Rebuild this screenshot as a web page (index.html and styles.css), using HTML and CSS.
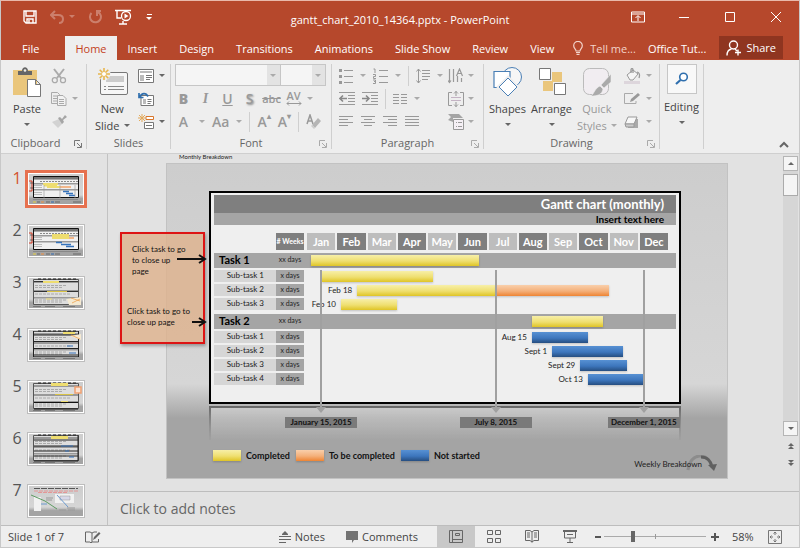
FILE: index.html
```html
<!DOCTYPE html>
<html lang="en">
<head>
    <meta charset="UTF-8">
    <meta name="viewport" content="width=device-width, initial-scale=1.0">
    <title>gantt_chart_2010_14364.pptx - PowerPoint</title>
    <link rel="stylesheet" href="styles.css">
</head>
<body>
<div class="window">
    <header class="titlebar">
        <div class="quick-access">
            <button aria-label="Save"><svg width="14" height="14" viewBox="0 0 14 14"><path d="M1 1h12v12H3l-2-2zM3 1v5h8V1M4 13V9h6v4M6 10v3" fill="none" stroke="#fff" stroke-width="1.4"/></svg></button>
            <button class="faded undo" aria-label="Undo"><svg width="14" height="14" viewBox="0 0 14 14"><path d="M5 1L1 5l4 4M1 5h7c3 0 5 1.500 5 4s-1.500 4-4 4" fill="none" stroke="#fff" stroke-width="2"/></svg><i class="caret"></i></button>
            <button class="faded" aria-label="Repeat"><svg width="14" height="14" viewBox="0 0 14 14"><path d="M3.500 3A5.500 5.500 0 1 0 10 2M9 6V1h4" fill="none" stroke="#fff" stroke-width="2"/></svg></button>
            <button aria-label="Start from beginning"><svg width="18" height="16" viewBox="0 0 18 16"><path d="M0 1.500h16M2 2v7h4M4 15h8M8 12v3" fill="none" stroke="#fff" stroke-width="1.400"/><circle cx="11" cy="7" r="4.500" fill="#b6482c" stroke="#fff" stroke-width="1.300"/><path d="M9.500 4.500l4 2.500-4 2.500z" fill="#fff"/></svg></button>
            <button class="customize" aria-label="Customize toolbar"><span class="bar-line"></span><i class="caret"></i></button>
        </div>
        <h1>gantt_chart_2010_14364.pptx - PowerPoint</h1>
        <div class="window-buttons">
            <button aria-label="Ribbon display options"><svg width="14" height="12" viewBox="0 0 14 12"><path d="M.5 1h13v10H.5zM.5 3h13M7 10V5M4.500 7L7 4.500 9.500 7" fill="none" stroke="#fff"/></svg></button>
            <button aria-label="Minimize"><svg width="10" height="10" viewBox="0 0 10 10"><path d="M0 5.500h10" stroke="#fff"/></svg></button>
            <button aria-label="Maximize"><svg width="10" height="10" viewBox="0 0 10 10"><path d="M.5.5h9v9h-9z" fill="none" stroke="#fff"/></svg></button>
            <button aria-label="Close"><svg width="10" height="10" viewBox="0 0 10 10"><path d="M0 0l10 10M10 0L0 10" stroke="#fff"/></svg></button>
        </div>
    </header>

    <nav class="tabs">
        <button class="file">File</button>
        <button class="active">Home</button>
        <button>Insert</button>
        <button>Design</button>
        <button>Transitions</button>
        <button>Animations</button>
        <button>Slide Show</button>
        <button>Review</button>
        <button>View</button>
        <button class="tell-me"><svg width="10" height="14" viewBox="0 0 10 14"><path d="M3 10C3 8 .7 7.500.7 4.700a4.300 4.300 0 0 1 8.600 0C9.300 7.500 7 8 7 10zM3 11.500h4M3.500 13.300h3" fill="none" stroke="#f3d3ca" stroke-width="1.200"/></svg>Tell me...</button>
        <button class="account">Office Tut...</button>
        <button class="share"><svg width="16" height="16" viewBox="0 0 16 16"><circle cx="7.500" cy="5" r="4" fill="none" stroke="#fff" stroke-width="1.400"/><path d="M1 15.500c0-4 2-6 4.500-6.500M9 9l2 2M12 9.500v6M9 12.500h6" fill="none" stroke="#fff" stroke-width="1.400"/></svg>Share</button>
    </nav>

    <section class="ribbon">
        <div class="group clipboard">
            <div class="group-body">
                <button class="big">
                    <svg width="30" height="30" viewBox="0 0 30 30"><path d="M1 3h24v25H1z" fill="#eac67c"/><path d="M6 8V4h4c0-5 6-5 6 0h4v4z" fill="#666"/><circle cx="13" cy="3.500" r="1.300" fill="#eee"/><path d="M15.500 12.500h8l5 5v12h-13zM23.500 12.500v5h5" fill="#fff" stroke="#777"/></svg>
                    Paste<i class="caret"></i>
                </button>
                <div class="stack faded-icons">
                    <button aria-label="Cut"><svg width="16" height="16" viewBox="0 0 16 16"><path d="M3 1l7 9M13 1L6 10" fill="none" stroke="#aaa" stroke-width="2"/><circle cx="3.800" cy="12.200" r="2.500" fill="none" stroke="#aaa" stroke-width="1.300"/><circle cx="12" cy="12.200" r="2.500" fill="none" stroke="#aaa" stroke-width="1.300"/></svg></button>
                    <button aria-label="Copy"><svg width="16" height="16" viewBox="0 0 16 16"><path d="M.5 1.500h6l2 2v9h-8zM2 5h4M2 7.500h4M2 10h4" fill="none" stroke="#aaa"/><path d="M6.500 4.500h5.500l3 3v7H6.500z" fill="#f2f2f2" stroke="#aaa"/><path d="M8 8.500h5M8 10.500h5M8 12.500h5" stroke="#aaa"/></svg><i class="caret"></i></button>
                    <button aria-label="Format painter"><svg width="16" height="16" viewBox="0 0 16 16"><path d="M8 5l4 4-5 5-6-6z" fill="#d2d2d2"/><path d="M7 4l2-1 2 2 3-4 2 2-4 3 1 2-2 2z" fill="#a5a5a5"/></svg></button>
                </div>
            </div>
            <div class="group-label">Clipboard<svg class="launcher" width="8" height="8" viewBox="0 0 8 8"><path d="M.5 6V.5H6M3 3l4 4M7.500 3v4.500H3" fill="none" stroke="#777"/></svg></div>
        </div>

        <div class="group slides">
            <div class="group-body">
                <button class="big">
                    <svg width="31" height="30" viewBox="0 0 31 30"><rect x="3.500" y="5.500" width="27" height="22" rx="1.500" fill="#f6f6f6" stroke="#777"/><path d="M9 9h18v6H9z" fill="#ccc"/><path d="M7 19.500h2m2 0h16M7 22.500h2m2 0h16" stroke="#888"/><circle cx="7" cy="7" r="6.500" fill="#eee"/><path d="M7 1v12M1 7h12M2.700 2.700l8.600 8.600M11.300 2.700l-8.600 8.600" stroke="#e8b64e" stroke-width="1.600"/><circle cx="7" cy="7" r="2" fill="#fff"/></svg>
                    New<br><span>Slide<i class="caret"></i></span>
                </button>
                <div class="stack">
                    <button aria-label="Layout"><svg width="16" height="14" viewBox="0 0 16 14"><path d="M.5.5h15v13H.5z" fill="#fff" stroke="#777"/><path d="M2 2h12v2H2zM2 6h4v6H2z" fill="#bbb"/><path d="M8 6.500h6M8 8.500h6M8 10.500h4" stroke="#777"/></svg><i class="caret"></i></button>
                    <button aria-label="Reset"><svg width="16" height="14" viewBox="0 0 16 14"><path d="M3 3.500h12.500v10H3z" fill="#fff" stroke="#777"/><path d="M5 7h3v5H5z" fill="#bbb"/><path d="M9.500 7.500h4M9.500 9.500h4M9.500 11.500h3" stroke="#777"/><path d="M1.500 5C4 .5 8 .5 10 4.500M1 1v4.500h4.500" fill="none" stroke="#2f6fae" stroke-width="1.700"/></svg></button>
                    <button aria-label="Section"><svg width="16" height="16" viewBox="0 0 16 16"><path d="M8 2.500h7.500v3H8z" fill="#fff" stroke="#d9762b"/><path d="M6.500 8.500h9v6h-9zM8 11.500h6" fill="#fff" stroke="#777"/><path d="M4 0v8M0 4h8M1 1l6 6M7 1L1 7" stroke="#e3a95a"/></svg><i class="caret"></i></button>
                </div>
            </div>
            <div class="group-label">Slides</div>
        </div>

        <div class="group font faded-group">
            <div class="group-body rows">
                <div class="combos">
                    <div class="combo wide"><select aria-label="Font"><option></option></select></div>
                    <div class="combo"><select aria-label="Font size"><option></option></select></div>
                </div>
                <div class="tool-row letters">
                    <button><b>B</b></button>
                    <button><em>I</em></button>
                    <button><u>U</u></button>
                    <button class="shadow">S</button>
                    <button class="small"><s>abc</s></button>
                    <button class="spacing" aria-label="Character spacing">AV<svg width="16" height="5" viewBox="0 0 16 5"><path d="M1 2.500h14M3 .5l-2 2 2 2M13 .5l2 2-2 2" fill="none" stroke="#999"/></svg></button>
                    <i class="caret"></i>
                </div>
                <div class="tool-row letters sizes">
                    <button>A</button><i class="caret"></i>
                    <button class="aa">Aa</button><i class="caret"></i>
                    <span class="rule"></span>
                    <button class="aa">A<sup>▴</sup></button>
                    <button class="aa">A<sup>▾</sup></button>
                    <span class="rule"></span>
                    <button aria-label="Clear formatting"><svg width="16" height="16" viewBox="0 0 16 16"><path d="M1 10L4 1l3 9M2 7h4" fill="none" stroke="#999" stroke-width="1.500"/><path d="M6 11l6-7 3 3-6 7z" fill="#b5b5b5"/><path d="M5 12l3 3 1-1-3-3z" fill="#ccc"/></svg></button>
                </div>
            </div>
            <div class="group-label">Font<svg class="launcher" width="8" height="8" viewBox="0 0 8 8"><path d="M.5 6V.5H6M3 3l4 4M7.500 3v4.500H3" fill="none" stroke="#aaa"/></svg></div>
        </div>

        <div class="group paragraph faded-group">
            <div class="group-body">
                <div class="rows">
                    <div class="tool-row">
                        <button aria-label="Bullets"><svg width="14" height="16" viewBox="0 0 14 16"><path d="M5 2.500h9M5 8.500h9M5 14.500h9" stroke="#999"/><path d="M0 1h3v3H0zM0 7h3v3H0zM0 13h3v3H0z" fill="#999"/></svg></button><i class="caret"></i>
                        <button aria-label="Numbering"><svg width="15" height="16" viewBox="0 0 15 16"><path d="M6 2.500h9M6 8.500h9M6 14.500h9M.5 1H2v4M0 6.500h2.500v2H.5v2H3M0 12h2.500v3.500H0M1 13.500h1" fill="none" stroke="#999"/></svg></button><i class="caret"></i>
                        <span class="rule"></span>
                        <button aria-label="Line spacing"><svg width="14" height="16" viewBox="0 0 14 16"><path d="M6 2.500h8M6 5.500h8M6 8.500h8M6 11.500h6M2.500 1v14M.5 3.500L2.500 1l2 2.500M.5 12.500l2 2.500 2-2.500" fill="none" stroke="#999"/></svg></button><i class="caret"></i>
                    </div>
                    <div class="tool-row">
                        <button aria-label="Decrease indent"><svg width="16" height="13" viewBox="0 0 16 13"><path d="M0 .5h16M9 3.500h7M9 6.500h7M9 9.500h7M0 12.500h16" stroke="#999"/><path d="M1 6.500h7M4 3.500l-3 3 3 3" fill="none" stroke="#888" stroke-width="1.600"/></svg></button>
                        <button aria-label="Increase indent"><svg width="16" height="13" viewBox="0 0 16 13"><path d="M0 .5h16M9 3.500h7M9 6.500h7M9 9.500h7M0 12.500h16" stroke="#999"/><path d="M0 6.500h7M4 3.500l3 3-3 3" fill="none" stroke="#888" stroke-width="1.600"/></svg></button>
                        <span class="rule"></span>
                        <button aria-label="Columns"><svg width="14" height="12" viewBox="0 0 14 12"><path d="M0 1.500h6M8 1.500h6M0 4.500h6M8 4.500h6M0 7.500h6M8 7.500h6M0 10.500h6M8 10.500h6" stroke="#999"/></svg></button><i class="caret"></i>
                    </div>
                    <div class="tool-row aligns">
                        <button aria-label="Align left"><svg width="14" height="13" viewBox="0 0 14 13"><path d="M0 1.500h14M0 4.500h9M0 7.500h14M0 10.500h9" stroke="#999"/></svg></button>
                        <button aria-label="Center"><svg width="14" height="13" viewBox="0 0 14 13"><path d="M0 1.500h14M3 4.500h8M0 7.500h14M3 10.500h8" stroke="#999"/></svg></button>
                        <button aria-label="Align right"><svg width="14" height="13" viewBox="0 0 14 13"><path d="M0 1.500h14M5 4.500h9M0 7.500h14M5 10.500h9" stroke="#999"/></svg></button>
                        <button aria-label="Justify"><svg width="14" height="13" viewBox="0 0 14 13"><path d="M0 1.500h14M0 4.500h14M0 7.500h14M0 10.500h14" stroke="#999"/></svg></button>
                    </div>
                </div>
                <div class="rows text-tools">
                    <div class="tool-row"><button aria-label="Text direction"><svg width="16" height="16" viewBox="0 0 16 16"><path d="M1.500 1v13M5.500 1v13M9.500 8v6M13.500 10v4M0 12.500l1.500 2L3 12.500M8.500 8L11.500 1l3 7M9.500 5.500h4" fill="none" stroke="#999" stroke-width="1.200"/></svg></button><i class="caret"></i></div>
                    <div class="tool-row"><button aria-label="Align text"><svg width="16" height="16" viewBox="0 0 16 16"><path d="M4 1.500H.5v13H4M12 1.500h3.500v13H12M8 0v5M8 11v5M6 2.500L8 .5l2 2M6 13.500l2 2 2-2" fill="none" stroke="#999"/><path d="M3 6.500h10M3 9.500h10" stroke="#c4b3c4"/></svg></button><i class="caret"></i></div>
                    <div class="tool-row"><button aria-label="Convert to SmartArt"><svg width="16" height="16" viewBox="0 0 16 16"><path d="M0 0h11l4 4H5v4L0 6l3-3z" fill="#a5a5a5"/><path d="M5.500 5.500h10v10h-10zM8 8.500h1m1 0h4M8 12.500h1m1 0h4" fill="#f5f0f5" stroke="#999"/></svg></button><i class="caret"></i></div>
                </div>
            </div>
            <div class="group-label">Paragraph<svg class="launcher" width="8" height="8" viewBox="0 0 8 8"><path d="M.5 6V.5H6M3 3l4 4M7.500 3v4.500H3" fill="none" stroke="#aaa"/></svg></div>
        </div>

        <div class="group drawing">
            <div class="group-body">
                <button class="big">
                    <svg width="30" height="30" viewBox="0 0 30 30"><circle cx="19" cy="10" r="9.500" fill="#f6f6f6" stroke="#4a7fb5"/><path d="M1 4.500h16v16H1z" fill="#fff" stroke="#4a7fb5" stroke-width="1.200"/><path d="M15 11l9 9-9 9-9-9z" fill="#fff" stroke="#eee" stroke-width="4"/><path d="M15 11l9 9-9 9-9-9z" fill="#fff" stroke="#4a7fb5"/></svg>
                    Shapes<i class="caret"></i>
                </button>
                <button class="big">
                    <svg width="28" height="30" viewBox="0 0 28 30"><path d="M14 5h10v10H14zM5 14h10v10H5z" fill="#eac67c"/><path d="M1.500 1.500h11v11h-11zM16.500 16.500h11v11h-11z" fill="#fff" stroke="#777"/></svg>
                    Arrange<i class="caret"></i>
                </button>
                <button class="big dim">
                    <svg width="30" height="30" viewBox="0 0 30 30"><rect x="1.500" y="1.500" width="25" height="26" rx="6" fill="#f1edf1" stroke="#bbb"/><path d="M29 7v8l-7 6-3-3zM18 19l3 3c-1 6-6 7-12 7 3-2 4-8 9-10z" fill="#aaa" stroke="#eee" stroke-width=".6"/></svg>
                    Quick<br><span>Styles<i class="caret"></i></span>
                </button>
                <div class="stack faded-icons">
                    <button aria-label="Shape fill"><svg width="17" height="16" viewBox="0 0 17 16"><path d="M3 7l6-5 5 4-5 6H6z" fill="#f5f5f5" stroke="#999"/><path d="M7 5V2c0-2 2-2 2 0v3M13 4c3 1 3 3 2 6" fill="none" stroke="#999" stroke-width="1.300"/><path d="M0 13h16v3H0z" fill="#ddd6dc"/></svg><i class="caret"></i></button>
                    <button aria-label="Shape outline"><svg width="17" height="13" viewBox="0 0 17 13"><path d="M9 1.500H.5v10H12V9" fill="none" stroke="#aaa"/><path d="M6 10l1-3 7-6 2 2-7 6z" fill="#999"/></svg><i class="caret"></i></button>
                    <button aria-label="Shape effects"><svg width="17" height="14" viewBox="0 0 17 14"><path d="M4 4h10v9H4z" fill="#aaa"/><path d="M1 9l3-7h9l-3 7z" fill="#f8f8f8" stroke="#999"/><path d="M1 9h9v3H2z" fill="#ccc" stroke="#999"/></svg><i class="caret"></i></button>
                </div>
            </div>
            <div class="group-label">Drawing<svg class="launcher" width="8" height="8" viewBox="0 0 8 8"><path d="M.5 6V.5H6M3 3l4 4M7.500 3v4.500H3" fill="none" stroke="#aaa"/></svg></div>
        </div>

        <div class="group editing">
            <button class="big">
                <span class="find-box"><svg width="14" height="14" viewBox="0 0 14 14"><circle cx="8.500" cy="5" r="3.800" fill="#fff" stroke="#2f6fae" stroke-width="1.600"/><path d="M5.500 8L1 12" stroke="#2f6fae" stroke-width="2.200"/></svg></span>
                Editing<i class="caret"></i>
            </button>
        </div>
        <button class="collapse" aria-label="Collapse the ribbon"><svg width="10" height="7" viewBox="0 0 10 7"><path d="M1 6l4-4 4 4" fill="none" stroke="#666" stroke-width="2"/></svg></button>
    </section>

    <main class="workspace">
        <!-- reusable thumbnail artwork -->
        <svg class="defs" width="0" height="0">
            <defs>
                <linearGradient id="slide-bg" x1="0" y1="0" x2="0" y2="1">
                    <stop offset="0" stop-color="#cdcdcd"/><stop offset=".7" stop-color="#d6d6d6"/><stop offset=".82" stop-color="#a4a4a4"/><stop offset="1" stop-color="#a4a4a4"/>
                </linearGradient>
                <symbol id="thumb-gantt" viewBox="0 0 54 30">
                    <path d="M0 0h54v30H0z" fill="url(#slide-bg)"/>
                    <path d="M4.500 2.500h45v21h-45z" fill="#f0f0f0" stroke="#111"/>
                    <path d="M5 3h44v2H5z" fill="#777"/><path d="M5 5h44v1H5z" fill="#aaa"/>
                    <path d="M11 7.500h38" stroke="#888" stroke-dasharray="2 1"/>
                    <path d="M5 9h44v1.500H5zM5 15h44v1.500H5z" fill="#999"/>
                    <path d="M5 11.500h8M5 13.500h8M5 18.500h8M5 20.500h8" stroke="#bbb"/>
                    <path d="M0 7h3v10H0" fill="none" stroke="#d63a22"/>
                    <path d="M1 9h3M1 14h3" stroke="#333" stroke-width=".6"/>
                    <path d="M4 25.500h45M10 25.500h7M27 25.500h7" stroke="#888" stroke-width="1"/>
                    <path d="M4 28h3" stroke="#e5cf3b"/><path d="M12 28h3" stroke="#ee8c3c"/><path d="M22 28h3" stroke="#2f66ad"/><path d="M8 28h3M17 28h4M26 28h5M44 28h8" stroke="#666"/>
                </symbol>
                <symbol id="thumb-weeks" viewBox="0 0 54 30">
                    <path d="M0 0h54v30H0z" fill="url(#slide-bg)"/>
                    <path d="M4.500 1.500h45v25h-45z" fill="#ddd" stroke="#555"/>
                    <path d="M9 1h40" stroke="#222" stroke-dasharray="3 2"/>
                    <path d="M5 3h44v2H5zM5 12h44v2H5zM5 19h44v1.500H5z" fill="#999"/>
                    <path d="M6 7.500h32M6 9.500h28M6 16h36M6 22h32M6 24h28" stroke="#aaa" stroke-dasharray="3 1"/>
                    <path d="M4 28.500h8M16 28.500h10M34 28.500h12" stroke="#777"/>
                </symbol>
            </defs>
        </svg>

        <aside class="thumbnails">
            <a class="thumb selected" href="#slide"><span>1</span><svg viewBox="0 0 54 30"><use href="#thumb-gantt"/><path d="M14 10h15M15 11.500h13M18 13h13" stroke="#eedd70" stroke-width="2"/><path d="M31 13h11" stroke="#f2a368" stroke-width="1.500"/><path d="M34 17.500h6M37 19.500h7M40 21.500h6" stroke="#3673bb" stroke-width="1.500"/><path d="M15 11v13M31 11v13M46 11v13" stroke="#999" stroke-width=".6"/></svg></a>
            <a class="thumb" href="#slide"><span>2</span><svg viewBox="0 0 54 30"><use href="#thumb-gantt"/><path d="M23 8h17v5H23z" fill="#eedd70"/><path d="M40 12h5" stroke="#f2a368" stroke-width="1.500"/><path d="M27 16.500h6M32 18.500h10M37 20.500h8" stroke="#3673bb" stroke-width="1.500"/></svg></a>
            <a class="thumb" href="#slide"><span>3</span><svg viewBox="0 0 54 30"><use href="#thumb-weeks"/><path d="M5 3.500h44M5 13.500h44" stroke="#333"/><path d="M14 4h16" stroke="#eedd70" stroke-width="2"/><path d="M18 13.500h20" stroke="#d8c245"/><path d="M17 21h6" stroke="#eedd70"/><path d="M38 21l14-2v8H40z" fill="#f5ead2"/><path d="M42 20l9 3M43 25l8-4" stroke="#ee9b41" stroke-width=".7"/></svg></a>
            <a class="thumb" href="#slide"><span>4</span><svg viewBox="0 0 54 30"><use href="#thumb-weeks"/><path d="M5 5h44M5 11.500h44M5 18.500h44M5 25h44M4.500 1v26M49.500 1v26" stroke="#222"/><path d="M34 3h12" stroke="#eedd70" stroke-width="2"/><path d="M41 6l11-2v6z" fill="#f5ead2"/><path d="M42 5l9 4" stroke="#ee9b41" stroke-width=".7"/><path d="M38 16h6M40 23h7" stroke="#3673bb"/></svg></a>
            <a class="thumb" href="#slide"><span>5</span><svg viewBox="0 0 54 30"><use href="#thumb-weeks"/><path d="M22 1h17v3H22zM32 19h7v2h-7z" fill="#eedd70"/><path d="M26 12.500h18" stroke="#d8c245"/><path d="M5 20.500h44M5 27h44" stroke="#111"/><path d="M46 5h6v6h-6z" fill="#fbe3d2" stroke="#f0a070" stroke-width="1.500"/></svg></a>
            <a class="thumb" href="#slide"><span>6</span><svg viewBox="0 0 54 30"><use href="#thumb-weeks"/><path d="M22 2h17v3H22z" fill="#eedd70"/><path d="M5 6h44M5 12h44M5 17h44M5 22h44M5 27h44M49 1v26" stroke="#222"/><path d="M32 12h12M36 17h4M40 23h5" stroke="#3673bb"/></svg></a>
            <a class="thumb" href="#slide"><span>7</span><svg viewBox="0 0 54 30"><path d="M0 0h54v30H0z" fill="url(#slide-bg)"/><path d="M5 2.500h44" stroke="#555" stroke-dasharray="6 1"/><path d="M5 5h44M9 6.500h30" stroke="#e88888" stroke-width=".8" stroke-dasharray="4 1"/><path d="M5 11h7v14H5zM26 8h19v9H26z" fill="#f1f1f1"/><path d="M31 10h10v4H31z" fill="#d8d8e8" stroke="#999" stroke-width=".5"/><path d="M2 9l14 6 12 8" fill="none" stroke="#5d9b62"/><path d="M28 9l11 12M12 18h6" stroke="#6b9ace"/><path d="M17 12h7M17 14h6M30 24h7M38 22h8M39 24h7" stroke="#999"/></svg></a>
        </aside>

        <div class="editor">
            <div class="stage">
                <p class="outside-note">Monthly Breakdown</p>
                <article class="slide" id="slide">
                    <div class="chart">
                        <h2>Gantt chart (monthly)</h2>
                        <h3>Insert text here</h3>
                        <div class="row months">
                            <span class="days">#&nbsp;Weeks</span>
                            <div class="month-list"><span>Jan</span><span>Feb</span><span>Mar</span><span>Apr</span><span>May</span><span>Jun</span><span>Jul</span><span>Aug</span><span>Sep</span><span>Oct</span><span>Nov</span><span>Dec</span></div>
                        </div>

                        <div class="row task"><span class="name">Task 1</span><span class="days">xx days</span>
                            <div class="track"><span class="start" style="width: 1%"></span><span class="bar done" style="width: 46.6%"></span></div></div>
                        <div class="row"><span class="name">Sub-task 1</span><span class="days">x days</span>
                            <div class="track"><span class="start" style="width: 4.2%"></span><span class="bar done" style="width: 30.8%"></span></div></div>
                        <div class="row"><span class="name">Sub-task 2</span><span class="days">x days</span>
                            <div class="track"><span class="start" style="width: 13.9%">Feb 18</span><span class="bar done" style="width: 38.5%"></span><span class="bar todo" style="width: 31.3%"></span></div></div>
                        <div class="row"><span class="name">Sub-task 3</span><span class="days">x days</span>
                            <div class="track"><span class="start" style="width: 9.4%">Feb 10</span><span class="bar done" style="width: 15.6%"></span></div></div>

                        <div class="row task second"><span class="name">Task 2</span><span class="days">xx days</span>
                            <div class="track"><span class="start" style="width: 62.3%"></span><span class="bar done" style="width: 19.7%"></span></div></div>
                        <div class="row"><span class="name">Sub-task 1</span><span class="days">x days</span>
                            <div class="track"><span class="start" style="width: 62.3%">Aug 15</span><span class="bar idle" style="width: 15.5%"></span></div></div>
                        <div class="row"><span class="name">Sub-task 2</span><span class="days">x days</span>
                            <div class="track"><span class="start" style="width: 67.9%">Sept 1</span><span class="bar idle" style="width: 19.7%"></span></div></div>
                        <div class="row"><span class="name">Sub-task 3</span><span class="days">x days</span>
                            <div class="track"><span class="start" style="width: 75.7%">Sept 29</span><span class="bar idle" style="width: 13%"></span></div></div>
                        <div class="row"><span class="name">Sub-task 4</span><span class="days">x days</span>
                            <div class="track"><span class="start" style="width: 77.8%">Oct 13</span><span class="bar idle" style="width: 15.3%"></span></div></div>

                        <div class="markers">
                            <div class="marker" style="left: 3.9%"><span>January 15, 2015</span></div>
                            <div class="marker" style="left: 52.3%"><span>July 8, 2015</span></div>
                            <div class="marker" style="left: 93.3%"><span>December 1, 2015</span></div>
                        </div>
                    </div>
                    <div class="reflection"></div>
                    <div class="slide-foot">
                        <ul class="legend">
                            <li><span class="bar done"></span>Completed</li>
                            <li><span class="bar todo"></span>To be completed</li>
                            <li><span class="bar idle"></span>Not started</li>
                        </ul>
                        <p class="weekly">Weekly Breakdown<svg width="31" height="16" viewBox="0 0 31 16"><path d="M2 15C4-3 22-3 26 11" fill="none" stroke="#8c8c8c" stroke-width="3"/><path d="M15 2c6 0 10 4 11 10" fill="none" stroke="#606060" stroke-width="3"/><path d="M22 10l9-1-3 7z" fill="#606060"/></svg></p>
                    </div>
                </article>
                <div class="callout">
                    <p>Click task to go<br>to close up<br>page</p>
                    <p class="lower">Click task to go to<br>close up page</p>
                    <svg class="arrow" width="30" height="10" viewBox="0 0 30 10"><path d="M0 5h28M22 1l6 4-6 4" fill="none" stroke="#111" stroke-width="2"/></svg>
                    <svg class="arrow low" width="15" height="10" viewBox="0 0 15 10"><path d="M0 5h13M7 1l6 4-6 4" fill="none" stroke="#111" stroke-width="2"/></svg>
                </div>
                <div class="scrollbar">
                    <button aria-label="Scroll up"><i class="caret up"></i></button>
                    <div class="rail"><span class="grip"></span></div>
                    <button aria-label="Scroll down"><i class="caret"></i></button>
                    <button class="plain" aria-label="Previous slide"><i class="caret up"></i><i class="caret up"></i></button>
                    <button class="plain" aria-label="Next slide"><i class="caret"></i><i class="caret"></i></button>
                </div>
            </div>
            <div class="notes">Click to add notes</div>
        </div>
    </main>

    <footer class="statusbar">
        <span class="slide-count">Slide 1 of 7</span>
        <button aria-label="Spelling"><svg width="16" height="14" viewBox="0 0 16 14"><path d="M7 3v9l-1 1-1-1H.5V2H5l2 1 2-1h3M7 12h6.500V9" fill="none" stroke="#666"/><path d="M8 10l1-3 5-5 1.500 1.500-5 5z" fill="#666"/></svg></button>
        <button class="notes-button"><svg width="12" height="12" viewBox="0 0 12 12"><path d="M0 5.500h12M0 8.500h12M0 11.500h7M3 3.500h6" stroke="#666"/><path d="M3 3l3-3 3 3z" fill="#666"/></svg>Notes</button>
        <button class="comments-button"><svg width="12" height="12" viewBox="0 0 12 12"><path d="M0 0h12v9H8l-2 3V9H0z" fill="#737373"/></svg>Comments</button>
        <div class="views">
            <button class="on" aria-label="Normal"><svg width="14" height="13" viewBox="0 0 14 13"><path d="M.5.5h13v12H.5zM3.500.5v12M3.500 9.500h10M6.500 3.500h4v2h-4z" fill="none" stroke="#666"/></svg></button>
            <button aria-label="Slide sorter"><svg width="14" height="13" viewBox="0 0 14 13"><path d="M.5.5h5v4h-5zM8.500.5h5v4h-5zM.5 8.500h5v4h-5zM8.500 8.500h5v4h-5z" fill="none" stroke="#666"/></svg></button>
            <button aria-label="Reading view"><svg width="14" height="13" viewBox="0 0 14 13"><path d="M7 2v10.500M.5.500H5l2 1.500 2-1.500h4.500v10H9l-2 1.500-2-1.500H.5zM2 3h3M2 5h3M2 7h3M9 3h3M9 5h3M9 7h3" fill="none" stroke="#666"/></svg></button>
            <button aria-label="Slide show"><svg width="14" height="13" viewBox="0 0 14 13"><path d="M0 1h14" stroke="#666" stroke-width="2"/><path d="M1.500 2v6h11V2M4 4.500h6M7 8v4.500M4 12.500h6" fill="none" stroke="#666"/></svg></button>
        </div>
        <button class="zoom-step" aria-label="Zoom out"><svg width="8" height="8" viewBox="0 0 8 8"><path d="M1 4h6" stroke="#555" stroke-width="2"/></svg></button>
        <input type="range" min="0" max="100" value="28" aria-label="Zoom">
        <button class="zoom-step" aria-label="Zoom in"><svg width="8" height="8" viewBox="0 0 8 8"><path d="M0 4h8M4 0v8" stroke="#555" stroke-width="2"/></svg></button>
        <span class="percent">58%</span>
        <button class="fit" aria-label="Fit slide to window"><svg width="14" height="14" viewBox="0 0 14 14"><path d="M.5.5h13v13H.5zM7 2v3M7 9v3M2 7h3M9 7h3M5.500 3.500L7 2l1.500 1.500M5.500 10.500L7 12l1.500-1.500M3.500 5.500L2 7l1.500 1.500M10.500 5.500L12 7l-1.500 1.500" fill="none" stroke="#777"/></svg></button>
    </footer>
</div>
</body>
</html>
```
FILE: styles.css
```css
* {
    box-sizing: border-box;
}

body {
    margin: 0;
    font-family: "Open Sans", "Noto Sans", sans-serif;
    font-size: 11px;
    color: #444;
    background-color: #e2e2e2;
}

h1, h2, h3, p, ul {
    margin: 0;
    padding: 0;
}

button {
    font: inherit;
    color: inherit;
    background: none;
    border: none;
    padding: 0;
    margin: 0;
    display: flex;
    align-items: center;
    justify-content: center;
    white-space: nowrap;
}

svg {
    display: block;
    flex: none;
}

.window {
    min-height: 100vh;
    display: flex;
    flex-direction: column;
    border: 1px solid #c8c8c8;
    border-top-color: #e9b9ab;
}

.caret {
    flex: none;
    width: 0;
    height: 0;
    border: 3px solid transparent;
    border-top-color: #666;
    border-bottom: none;
}

.caret.up {
    border-top: none;
    border-bottom: 3px solid #666;
}

/* title bar */
.titlebar {
    display: grid;
    grid-template-columns: 1fr auto 1fr;
    align-items: center;
    height: 35px;
    background-color: #b6482c;
    color: #fff;
}

.titlebar .caret {
    border-top-color: #fff;
}

.titlebar h1 {
    font-size: 11px;
    font-weight: normal;
    padding-top: 2px;
}

.quick-access {
    display: flex;
    align-items: center;
    gap: 13px;
    padding-left: 22px;
    padding-bottom: 4px;
}

.quick-access .faded {
    opacity: 0.3;
}

.quick-access .undo {
    gap: 5px;
}

.customize {
    flex-direction: column;
    gap: 2px;
}

.bar-line {
    width: 5px;
    height: 1px;
    background-color: #fff;
}

.window-buttons {
    display: flex;
    justify-content: flex-end;
    padding-bottom: 4px;
}

.window-buttons button {
    width: 46px;
    height: 28px;
}

/* ribbon tabs */
.tabs {
    display: flex;
    align-items: stretch;
    height: 24px;
    background-color: #b6482c;
    color: #fff;
}

.tabs button {
    padding: 0 11px;
}

.tabs .file {
    padding: 0 26px 0 21px;
}

.tabs .active {
    background-color: #eeeeee;
    color: #c43e1c;
    padding: 0 10px;
}

.tabs .tell-me {
    gap: 7px;
    padding: 0 10px 0 8px;
    color: #f3d3ca;
}

.tabs .account {
    padding: 0 2px;
}

.tabs .share {
    margin: 0 16px 1px auto;
    padding: 0 7px;
    gap: 4px;
    background-color: #8f3520;
}

/* ribbon */
.ribbon {
    display: flex;
    height: 94px;
    padding-top: 4px;
    background-color: #eeeeee;
    border-bottom: 1px solid #cfcfcf;
}

.group {
    display: flex;
    flex-direction: column;
    margin-bottom: 4px;
    border-right: 1px solid #cfcfcf;
}

.group-body {
    display: flex;
    height: 75px;
}

.group-label {
    position: relative;
    line-height: 12px;
    text-align: center;
    color: #666;
}

.launcher {
    position: absolute;
    right: 4px;
    top: 3px;
}

.big {
    flex-direction: column;
    justify-content: flex-start;
    line-height: 17px;
    padding-top: 3px;
}

.big svg {
    margin-bottom: 3px;
}

.big > .caret {
    margin-top: 6px;
}

.big span {
    display: flex;
    align-items: center;
    gap: 4px;
}

.big br {
    display: none;
}

.dim {
    color: #999;
}

.dim .caret,
.faded-icons .caret,
.faded-group .caret {
    border-top-color: #aaa;
}

.stack {
    display: flex;
    flex-direction: column;
}

.stack button {
    height: 23px;
    gap: 5px;
    justify-content: flex-start;
}

.rows {
    display: flex;
    flex-direction: column;
}

.tool-row {
    display: flex;
    align-items: center;
    height: 23px;
    gap: 7px;
}

.rule {
    width: 1px;
    height: 20px;
    background-color: #cfcfcf;
}

.clipboard {
    width: 86px;
}

.clipboard .group-body {
    padding-left: 11px;
    gap: 9px;
}

.clipboard .group-label {
    padding-right: 16px;
}

.slides {
    width: 84px;
}

.slides .group-body {
    padding-left: 8px;
    gap: 8px;
}

.font {
    width: 161px;
}

.font .group-body {
    padding: 0 5px 0 4px;
}

.combos {
    display: flex;
    margin-bottom: 1px;
}

.combo {
    position: relative;
    flex: 1 1 46px;
    height: 22px;
    border: 1px solid #c6c6c6;
    background-color: #f5f5f5;
}

.combo.wide {
    flex: 1 1 105px;
    border-right: none;
}

.combo select {
    appearance: none;
    width: 100%;
    height: 100%;
    border: none;
    border-right: 13px solid #e3e3e3;
    background: none;
}

.combo::after {
    content: "";
    position: absolute;
    right: 4px;
    top: 9px;
    border: 3px solid transparent;
    border-top-color: #aaa;
    border-bottom: none;
}

.letters {
    gap: 5px;
    font-size: 14px;
    font-weight: 600;
    color: #999;
}

.letters.sizes {
    gap: 7px;
}

.letters button {
    width: 17px;
}

.letters .aa {
    width: auto;
}

.letters sup {
    font-size: 8px;
    line-height: 8px;
    align-self: flex-start;
}

.letters em {
    font-family: "Liberation Serif", serif;
}

.letters .shadow {
    text-shadow: 1px 1px 2px #888;
}

.letters .small {
    font-size: 11px;
}

.letters .spacing {
    flex-direction: column;
    font-size: 11px;
    line-height: 10px;
}

.paragraph {
    width: 152px;
}

.paragraph .group-body {
    padding-left: 7px;
    justify-content: space-between;
    padding-right: 9px;
}

.text-tools .tool-row {
    gap: 4px;
}

.tool-row.aligns {
    gap: 8px;
}

.drawing {
    width: 176px;
}

.drawing .group-body {
    padding-left: 5px;
    gap: 5px;
}

.drawing .stack {
    margin-left: 2px;
}

.drawing .stack button {
    gap: 5px;
}

.editing {
    width: 44px;
}

.editing .big {
    padding-top: 0;
}

.editing .find-box {
    justify-content: center;
    width: 30px;
    height: 30px;
    margin-bottom: 4px;
    border: 1px solid #c6c6c6;
    background-color: #f8f8f8;
}

.find-box svg {
    margin: 0;
}

.collapse {
    align-self: flex-end;
    margin: 0 10px 5px auto;
}

/* workspace */
.workspace {
    flex: 1;
    display: flex;
    background-color: #e2e2e2;
}

.defs {
    position: absolute;
}

.thumbnails {
    display: flex;
    flex-direction: column;
    gap: 14px;
    width: 107px;
    padding: 16px 0 2px 10px;
    border-right: 1px solid #c2c2c2;
}

.thumb {
    display: flex;
    align-items: flex-start;
    gap: 4px;
    height: 38px;
    color: #555;
    font-size: 16px;
    line-height: 16px;
    text-decoration: none;
}

.thumb span {
    width: 12px;
    text-align: center;
}

.thumb svg {
    width: 58px;
    height: 34px;
    margin: 2px 0;
    padding: 1px;
    border: 1px solid #bdbdbd;
    background-color: #fff;
}

.thumb.selected {
    color: #d35230;
}

.thumb.selected svg {
    outline: 2px solid #e6714f;
    border-color: #e6714f;
}

.editor {
    flex: 1;
    display: flex;
    flex-direction: column;
}

.stage {
    position: relative;
    flex: 1;
    padding: 9px 71px 11px 58px;
    font-family: Lato, "Open Sans", sans-serif;
    color: #222;
}

.outside-note {
    position: absolute;
    left: 71px;
    top: -2px;
    font-size: 6px;
    line-height: 9px;
}

.slide {
    padding: 27px 46px 0 42px;
    border: 1px solid #c2c2c2;
    background: linear-gradient(#cdcdcd, #d6d6d6 70%, #a4a4a4 81%);
}

.chart {
    position: relative;
    padding: 2px 3px 15px;
    border: 2px solid #000;
    background-color: #efefef;
}

.chart h2 {
    padding-right: 12px;
    font-size: 13px;
    line-height: 18px;
    text-align: right;
    color: #fff;
    background-color: #7f7f7f;
}

.chart h3 {
    padding-right: 12px;
    margin-bottom: 8px;
    font-size: 10px;
    line-height: 12px;
    text-align: right;
    color: #000;
    background-color: #a5a5a5;
}

.row {
    display: flex;
    height: 12px;
    margin-bottom: 2px;
    padding-right: 8px;
    font-size: 8px;
    line-height: 11px;
}

.row .name {
    width: 62px;
    padding-right: 12px;
    text-align: right;
    background-color: #d6d6d6;
}

.row .days {
    width: 28px;
    margin-right: 3px;
    text-align: center;
    font-size: 7px;
    background-color: #a5a5a5;
}

.row.months {
    height: 17px;
    margin-bottom: 3px;
    padding-left: 62px;
    line-height: 17px;
}

.months .days {
    color: #fff;
    font-weight: bold;
    background-color: #7f7f7f;
}

.month-list {
    flex: 1;
    display: grid;
    grid-template-columns: repeat(12, 1fr);
    gap: 2px;
    font-size: 11px;
    font-weight: bold;
    text-align: center;
    color: #fff;
}

.month-list span {
    background-color: #bdbdbd;
}

.month-list span:nth-child(even) {
    background-color: #7f7f7f;
}

.row.task {
    height: 15px;
    line-height: 13px;
    background-color: #a5a5a5;
}

.row.task.second {
    margin-top: 4px;
}

.task .name {
    padding-left: 5px;
    text-align: left;
    font-size: 11px;
    font-weight: bold;
    color: #000;
    background: none;
}

.track {
    flex: 1;
    display: flex;
    align-items: center;
}

.start {
    padding-right: 5px;
    text-align: right;
    white-space: nowrap;
    direction: rtl;
    unicode-bidi: plaintext;
}

.task .start {
    padding: 0;
}

.bar {
    height: 11px;
    box-shadow: 0 1px 2px rgba(0, 0, 0, 0.2);
}

.done {
    background: linear-gradient(#f7efa8, #efdf70 55%, #dfc426);
}

.todo {
    background: linear-gradient(#f9cfab, #f4b07a 55%, #ee8433);
}

.idle {
    background: linear-gradient(#5791d3, #3d76bd 55%, #264e80);
}

/* milestone lines run down from the chart into the reflection */
.markers {
    position: absolute;
    top: 77px;
    bottom: -26px;
    left: 96px;
    right: 11px;
    pointer-events: none;
}

.marker {
    position: absolute;
    top: 0;
    bottom: 0;
    display: flex;
    flex-direction: column;
    align-items: center;
    transform: translateX(-50%);
}

.marker::before {
    content: "";
    flex: 1;
    width: 2px;
    background-color: #a0a0a0;
}

.marker::after {
    content: "";
    order: 1;
    border: 5px solid transparent;
    border-top: 6px solid #a0a0a0;
    border-bottom: none;
}

.marker span {
    order: 2;
    width: 72px;
    margin-top: 4px;
    font-size: 8px;
    font-weight: bold;
    line-height: 11px;
    text-align: center;
    white-space: nowrap;
    color: #111;
    background-color: #7a7a7a;
}

.reflection {
    height: 34px;
    margin-top: 2px;
    border: 2px solid;
    border-bottom: none;
    border-image: linear-gradient(#666, rgba(102, 102, 102, 0)) 2;
    background: linear-gradient(rgba(205, 205, 205, 0.8), rgba(164, 164, 164, 0));
}

.slide-foot {
    display: flex;
    justify-content: space-between;
    height: 38px;
    margin: 0 -21px 0 4px;
    padding: 10px 0 8px;
}

.legend {
    display: flex;
    gap: 6px;
    list-style: none;
    font-size: 9px;
    font-weight: bold;
    line-height: 11px;
    color: #111;
}

.legend li {
    display: flex;
    gap: 5px;
}

.legend .bar {
    width: 28px;
}

.weekly {
    position: relative;
    z-index: 0;
    align-self: flex-end;
    font-size: 8px;
    line-height: 12px;
}

.weekly svg {
    position: absolute;
    left: 52px;
    top: -3px;
    z-index: -1;
}

.callout {
    position: absolute;
    left: 12px;
    top: 78px;
    width: 85px;
    height: 112px;
    padding: 10px 0 0 10px;
    border: 2px solid #dd1414;
    background-color: rgba(222, 178, 140, 0.8);
    box-shadow: 1px 2px 3px rgba(0, 0, 0, 0.3);
    font-size: 8px;
    line-height: 11px;
    white-space: nowrap;
    color: #111;
}

.callout .lower {
    margin: 29px 0 0 -5px;
}

.arrow {
    position: absolute;
    right: -4px;
    top: 20px;
}

.arrow.low {
    top: 83px;
}

.scrollbar {
    position: absolute;
    right: 1px;
    top: 2px;
    bottom: 21px;
    width: 15px;
    display: flex;
    flex-direction: column;
}

.scrollbar button {
    flex: none;
    flex-direction: column;
    height: 15px;
    border: 1px solid #b5b5b5;
    background-color: #f5f5f5;
}

.scrollbar .plain {
    margin-top: 2px;
    border: none;
    background: none;
}

.rail {
    flex: 1;
    padding-top: 3px;
    background-color: #d6d6d6;
}

.grip {
    display: block;
    height: 22px;
    border: 1px solid #ababab;
    background-color: #f5f5f5;
}

.notes {
    margin-left: 2px;
    padding: 6px 10px 5px;
    border-top: 1px solid #bdbdbd;
    font-size: 14px;
    line-height: 22px;
    color: #666;
}

/* status bar */
.statusbar {
    display: flex;
    align-items: center;
    height: 22px;
    border-top: 1px solid #bdbdbd;
    background-color: #eeeeee;
}

.slide-count {
    width: 84px;
    padding-left: 7px;
}

.notes-button,
.comments-button {
    gap: 4px;
}

.notes-button {
    margin-left: auto;
}

.comments-button {
    margin: 0 19px 0 21px;
}

.views {
    display: flex;
    align-self: stretch;
    margin-right: 4px;
}

.views button {
    width: 38px;
}

.views .on {
    background-color: #c8c8c8;
}

.zoom-step {
    width: 10px;
}

.statusbar input {
    appearance: none;
    width: 102px;
    height: 12px;
    margin: 0 4px 0 1px;
    background: linear-gradient(#999, #999) center / 1px 5px no-repeat, linear-gradient(#aaa, #aaa) center / 100% 1px no-repeat;
}

.statusbar input::-webkit-slider-thumb {
    appearance: none;
    width: 4px;
    height: 11px;
    background-color: #666;
}

.percent {
    width: 36px;
    margin-left: 12px;
}

.fit {
    margin-right: 17px;
}
```
